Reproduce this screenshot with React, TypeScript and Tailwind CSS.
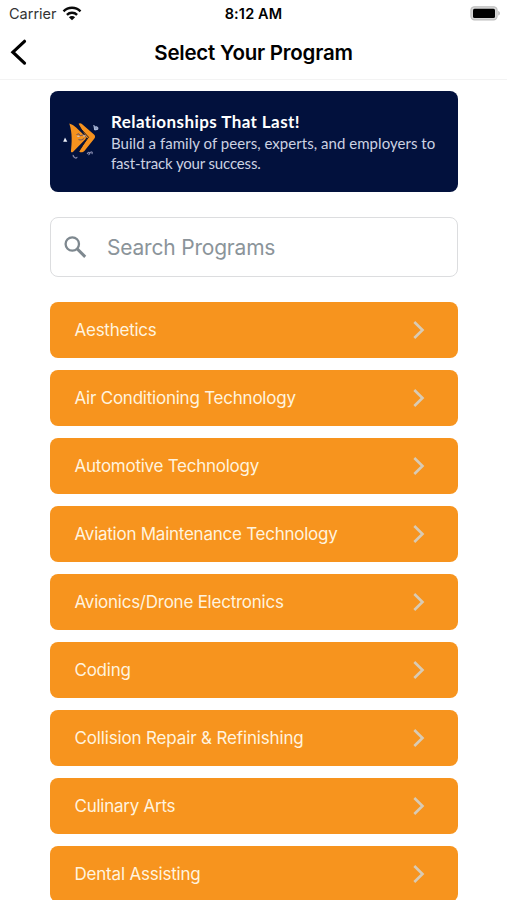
import { useState } from "react";

const PROGRAMS = [
  { name: "Aesthetics", tracking: "tracking-[-0.25px]" },
  { name: "Air Conditioning Technology", tracking: "tracking-[-0.23px]" },
  { name: "Automotive Technology", tracking: "tracking-[-0.26px]" },
  { name: "Aviation Maintenance Technology", tracking: "tracking-[-0.25px]" },
  { name: "Avionics/Drone Electronics", tracking: "tracking-[-0.24px]" },
  { name: "Coding", tracking: "tracking-[-0.25px]" },
  { name: "Collision Repair & Refinishing", tracking: "tracking-[-0.15px]" },
  { name: "Culinary Arts", tracking: "tracking-[-0.25px]" },
  { name: "Dental Assisting", tracking: "tracking-[-0.2px]" },
];

function WifiIcon() {
  return (
    <svg width="20" height="16" viewBox="0 0 20 16" fill="none" stroke="#0a0a0a" strokeWidth="2.4">
      <path d="M1.500 5.300a12 12 0 0 1 17 0" />
      <path d="M4.900 8.800a7.300 7.300 0 0 1 10.200 0" />
      <path d="M10 14.300 6.900 11.200a4.400 4.400 0 0 1 6.200 0z" fill="#0a0a0a" stroke="none" />
    </svg>
  );
}

function BatteryIcon() {
  return (
    <svg width="31" height="15" viewBox="0 0 31 15">
      <rect x="0.900" y="0.700" width="26.200" height="13.200" rx="3.600" fill="#d6d6d6" stroke="#bdbdbd" strokeWidth="1.100" />
      <rect x="3" y="2.700" width="22" height="9.200" rx="1.500" fill="#000" />
      <path d="M28.300 5c2 .7 2 3.900 0 4.600z" fill="#b0b0b0" />
    </svg>
  );
}

/** Orange double-arrow mascot with confetti around it. */
function Mascot() {
  return (
    <svg width="36" height="40" viewBox="0 0 36 40" className="mb-[6px] ml-px shrink-0">
      <path d="M15.600 4.800c1-1 2.600-.5 3.600.4l11.800 10.200c1.500 1.500 1.300 3 .2 4.400L21.400 32c-1.300 1.500-3.500 1.700-5.200.8l8-13z" fill="#f6921e" />
      <path d="M6.300 4.400c2.500.6 4.800 2.200 6.800 4.200l9.100 8.600c1 1 1 2 .2 3L9.900 33c-.8.600-1.800.5-2-.5.900-9 1.700-18-1.600-28.100z" fill="#f6921e" />
      <path d="m14.200 6 11.300 12.200L15.500 32" fill="none" stroke="#171528" strokeWidth="1" />
      <path d="m13.500 15.500 2.500-.7 1 2 3.500-1M15.500 20.600c2 .8 4.500.2 5.800-1.600" fill="none" stroke="#6b5560" strokeWidth="1" />
      <path d="M14.300 17.300h2.200M20.300 16.900h2.200" stroke="#c9c2cc" strokeWidth="1.200" />
      <path d="M.2 22.700 2 18.500l2.300 4.200z" fill="#edf1fa" />
      <path d="m30.800 6 .9 5 3-.6c.8-2-.4-3.200-2.500-2.600" fill="#8f9fc6" stroke="#bdc8e4" strokeWidth=".9" />
      <path d="M10.200 35.800c-.4 1.800.8 2 1.900 3 .6.500 2 .1 1.800-.9M24.200 35c1.400-3.500 3.300-.3 2 .2 1.900-4 4.200-1.800 2.500-.3" fill="none" stroke="#7f84a8" strokeWidth="1.300" />
    </svg>
  );
}

function StatusBar() {
  return (
    <div className="grid h-[27px] grid-cols-3 items-center pl-[9px] pr-[6px] text-[14.5px] leading-[27px]">
      <div className="flex items-center gap-[5px]">
        <span className="text-[#333]">Carrier</span>
        <WifiIcon />
      </div>
      <span className="-ml-[3px] text-center font-semibold tracking-[0.15px] text-black">8:12 AM</span>
      <div className="flex justify-end">
        <BatteryIcon />
      </div>
    </div>
  );
}

function Header() {
  return (
    <header className="grid h-[53px] grid-cols-[60px_1fr_60px] items-center border-b border-[#f3f3f3]">
      <button type="button" aria-label="Back" className="pb-[3px] pl-[9px]">
        <svg width="20" height="28" viewBox="0 0 20 28" fill="none" stroke="#000" strokeWidth="3.200" strokeLinecap="round">
          <path d="M15.500 3.300 3.900 14.200l11.600 10.900" />
        </svg>
      </button>
      <h1 className="whitespace-nowrap text-center text-[20.5px] font-semibold tracking-[-0.22px] text-black">
        Select Your Program
      </h1>
    </header>
  );
}

function Banner() {
  return (
    <section className="flex h-[101px] items-center rounded-[8px] bg-[#02113d] pl-3 font-['Lato',sans-serif]">
      <Mascot />
      <div className="ml-[12px] pt-px">
        <h2 className="whitespace-nowrap text-[17px] font-bold leading-[22px] tracking-[0.42px] text-white [font-variant-ligatures:none]">
          Relationships That Last!
        </h2>
        <p className="whitespace-nowrap text-[15px] leading-[20px] text-[#ccd2e2]">
          <span className="tracking-[0.04px]">Build a family of peers, experts, and employers to</span>
          <br />
          <span className="tracking-[-0.15px]">fast-track your success.</span>
        </p>
      </div>
    </section>
  );
}

export default function App() {
  const [query, setQuery] = useState("");
  const visible = PROGRAMS.filter((p) => p.name.toLowerCase().includes(query.toLowerCase()));

  return (
    <div className="h-[900px] w-[507px] overflow-hidden bg-white font-['Inter',sans-serif]">
      <StatusBar />
      <Header />

      <main className="ml-[50px] w-[408px] pt-[11px]">
        <Banner />

        <label className="mt-[25px] flex h-[60px] items-center rounded-[8px] border border-[#dcdddf] bg-white pl-[13px]">
          <svg width="23" height="23" viewBox="0 0 23 23" fill="none" stroke="#7e888f" strokeWidth="2.300">
            <circle cx="8.300" cy="8" r="6.700" />
            <path d="m13.200 12.900 8 8" strokeWidth="2.900" />
          </svg>
          <input
            value={query}
            onChange={(e) => setQuery(e.target.value)}
            placeholder="Search Programs"
            className="ml-[20px] w-[320px] bg-transparent pt-[2px] text-[21px] tracking-[-0.2px] text-[#333] outline-none placeholder:text-[#8b949a]"
          />
        </label>

        <ul className="mt-[25px] flex flex-col gap-3">
          {visible.map((p) => (
            <li key={p.name}>
              <button
                type="button"
                className="flex h-[56px] w-full items-center justify-between rounded-[8px] bg-[#f7941e] pl-[24.500px] pr-[32px] text-[17px] text-[#fff3df]"
              >
                <span className={`pt-[2px] ${p.tracking}`}>{p.name}</span>
                <svg width="14" height="20" viewBox="0 0 14 20" fill="none" stroke="#d8cbb5" strokeWidth="2.600">
                  <path d="m2.300 2 8.200 8-8.200 8" />
                </svg>
              </button>
            </li>
          ))}
        </ul>
      </main>
    </div>
  );
}
